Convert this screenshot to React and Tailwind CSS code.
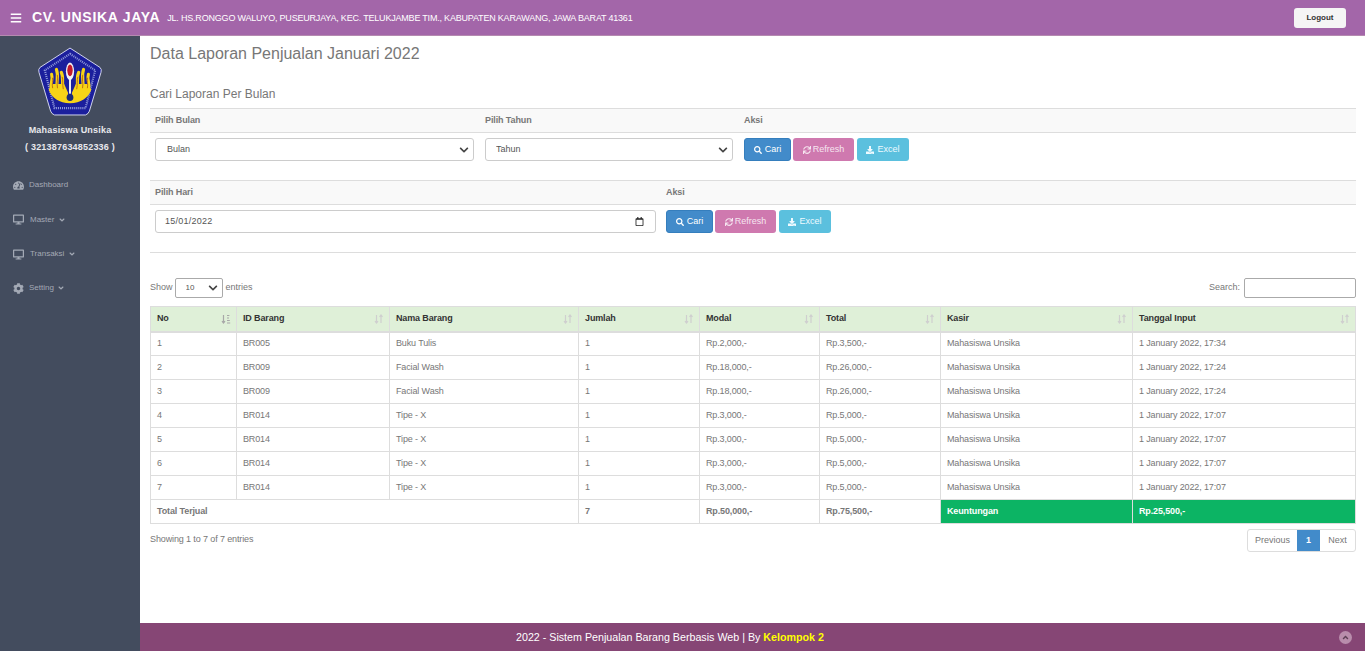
import { FaBars, FaTachometerAlt, FaDesktop, FaCog, FaAngleDown, FaAngleUp, FaSearch, FaSync, FaDownload, FaChevronDown, FaRegCalendar } from 'react-icons/fa'

const rows = [
  ['1', 'BR005', 'Buku Tulis', '1', 'Rp.2,000,-', 'Rp.3,500,-', 'Mahasiswa Unsika', '1 January 2022, 17:34'],
  ['2', 'BR009', 'Facial Wash', '1', 'Rp.18,000,-', 'Rp.26,000,-', 'Mahasiswa Unsika', '1 January 2022, 17:24'],
  ['3', 'BR009', 'Facial Wash', '1', 'Rp.18,000,-', 'Rp.26,000,-', 'Mahasiswa Unsika', '1 January 2022, 17:24'],
  ['4', 'BR014', 'Tipe - X', '1', 'Rp.3,000,-', 'Rp.5,000,-', 'Mahasiswa Unsika', '1 January 2022, 17:07'],
  ['5', 'BR014', 'Tipe - X', '1', 'Rp.3,000,-', 'Rp.5,000,-', 'Mahasiswa Unsika', '1 January 2022, 17:07'],
  ['6', 'BR014', 'Tipe - X', '1', 'Rp.3,000,-', 'Rp.5,000,-', 'Mahasiswa Unsika', '1 January 2022, 17:07'],
  ['7', 'BR014', 'Tipe - X', '1', 'Rp.3,000,-', 'Rp.5,000,-', 'Mahasiswa Unsika', '1 January 2022, 17:07'],
]

const columns = [
  { label: 'No', width: 'w-[86px]' },
  { label: 'ID Barang', width: 'w-[153px]' },
  { label: 'Nama Barang', width: 'w-[189px]' },
  { label: 'Jumlah', width: 'w-[121px]' },
  { label: 'Modal', width: 'w-[120px]' },
  { label: 'Total', width: 'w-[121px]' },
  { label: 'Kasir', width: 'w-[192px]' },
  { label: 'Tanggal Input', width: 'w-[223px]' },
]

const menu = [
  { icon: FaTachometerAlt, label: 'Dashboard', h: 'h-[34px]', gap: 'gap-[5px]' },
  { icon: FaDesktop, label: 'Master', caret: true, h: 'h-[35px]', gap: 'gap-[6px]' },
  { icon: FaDesktop, label: 'Transaksi', caret: true, h: 'h-[34px]', gap: 'gap-[6px]' },
  { icon: FaCog, label: 'Setting', caret: true, h: 'h-[34px]', gap: 'gap-[5px]' },
]

function Logo() {
  return (
    <svg width="64" height="70" viewBox="0 0 66 72" className="block">
      <path d="M33 1 L64 21 Q66 23 65 26 L53 66 Q52 69 49 70 L17 70 Q14 69 13 66 L1 26 Q0 23 2 21 Z" fill="#1b1f9c" stroke="#d5d8ee" strokeWidth="1" />
      <path d="M33 7 L59 24 L49 63 L17 63 L7 24 Z" fill="none" stroke="#8d96da" strokeWidth="2.2" strokeDasharray="1.1 1" />
      {/* wings */}
      <path d="M33 58 C22 58 14 52 11 44 L14 38 L27 38 L31 47 L31 50 L35 50 L35 47 L39 38 L52 38 L55 44 C52 52 44 58 33 58 Z" fill="#f7d417" />
      <g fill="none" strokeLinecap="round">
        <path d="M14 43 C12 37 16 34 14 28 M20 43 C18 36 22 31 19 23 M26 44 C24 37 27 32 24 26" stroke="#f7d417" strokeWidth="3.2" />
        <path d="M52 43 C54 37 50 34 52 28 M46 43 C48 36 44 31 47 23 M40 44 C42 37 39 32 42 26" stroke="#f7d417" strokeWidth="3.2" />
        <path d="M15 42 C14 38 16 35 15 32 M20 42 C19 37 21 33 20 29 M26 43 C25 38 26 34 25 31 M51 42 C52 38 50 35 51 32 M46 42 C47 37 45 33 46 29 M40 43 C41 38 40 34 41 31" stroke="#b8640f" strokeWidth="0.9" />
      </g>
      <ellipse cx="33" cy="25" rx="4.2" ry="9" fill="#f2f2f2" />
      <ellipse cx="33" cy="24" rx="2.8" ry="6" fill="#c3192d" />
      <rect x="32" y="31" width="2" height="17" fill="#f4f4f4" />
      <circle cx="33" cy="52" r="3.5" fill="#1a2a78" />
    </svg>
  )
}

function SortIcon({ active }) {
  if (active) {
    return (
      <svg width="10" height="10" viewBox="0 0 10 10" fill="none" className="text-[#a8a8a8]" stroke="currentColor" strokeWidth="1.2">
        <path d="M2.5 1v8M1 7.2 2.5 9 4 7.2M6 4h2M6 1.5h2.4M6 6.5h2.8M6 9h3.2" />
      </svg>
    )
  }
  return (
    <svg width="10" height="10" viewBox="0 0 10 10" fill="none" className="text-[#cfcfcf]" stroke="currentColor" strokeWidth="1.2">
      <path d="M2.5 1v8M1 7.2 2.5 9 4 7.2M7 9V1M5.5 2.8 7 1l1.5 1.8" />
    </svg>
  )
}

function Select({ label, box, text, chevron, size }) {
  return (
    <div className={`relative ${box}`}>
      <select className={`block h-full w-full appearance-none border bg-white text-[#555555] ${text}`}><option>{label}</option></select>
      <FaChevronDown size={size} className={`absolute top-1/2 -translate-y-1/2 text-[#444444] pointer-events-none ${chevron}`} />
    </div>
  )
}

function ActionButtons() {
  return (
    <div className="flex gap-[2px] text-[9px]">
      <button className="h-[23px] w-[47px] rounded-[3px] bg-[#428bca] border border-[#357ebd] text-white flex items-center justify-center gap-[3px]">
        <FaSearch size={8} />Cari
      </button>
      <button className="h-[23px] w-[61px] rounded-[3px] bg-[#cf79af] text-[#f6e6f0] flex items-center justify-center gap-[2px]">
        <FaSync size={8} />Refresh
      </button>
      <button className="ml-[1px] h-[23px] w-[52px] rounded-[3px] bg-[#5bc0de] text-[#eefaff] flex items-center justify-center gap-[3px]">
        <FaDownload size={8} />Excel
      </button>
    </div>
  )
}

function FilterHead({ children }) {
  return <div className="flex h-[25px] items-center bg-[#f9f9f9] border-y border-[#dddddd] text-[9px] font-bold tracking-[-0.12px] text-[#777777]">{children}</div>
}

export default function App() {
  return (
    <div className="h-[651px] w-[1365px] overflow-hidden flex flex-col bg-white font-['Liberation_Sans',Arial,sans-serif] text-[#777777]">
      {/* Topbar */}
      <header className="h-[36px] shrink-0 bg-[#a366a9] border-b border-[#b58ab0] flex items-center pl-[10px] pr-[19px] text-white">
        <FaBars size={12} />
        <span className="ml-[10px] text-[14px] font-bold tracking-[0.7px]">CV. UNSIKA JAYA</span>
        <span className="ml-[7px] text-[9px] tracking-[-0.2px] pt-[2px]">JL. HS.RONGGO WALUYO, PUSEURJAYA, KEC. TELUKJAMBE TIM., KABUPATEN KARAWANG, JAWA BARAT 41361</span>
        <button className="ml-auto h-[20px] w-[52px] rounded-[3px] bg-[#f5f5f5] text-[#333333] text-[8px] font-bold">Logout</button>
      </header>

      <div className="flex flex-1 min-h-0">
        {/* Sidebar */}
        <aside className="w-[140px] shrink-0 bg-[#434c5e] flex flex-col items-center pt-[11px]">
          <Logo />
          <p className="mt-[6px] text-[9px] leading-[14px] font-bold text-[#e8e8ec] tracking-[0.2px]">Mahasiswa Unsika</p>
          <p className="mt-[3px] text-[9px] leading-[14px] font-bold text-[#e8e8ec] tracking-[0.2px]">( 321387634852336 )</p>
          <nav className="self-stretch mt-[14px] pl-[13px] text-[8px] text-[#a3a9b5]">
            {menu.map(({ icon: Icon, label, caret, h, gap }) => (
              <div key={label} className={`${h} flex items-center ${gap}`}>
                <Icon size={11} />
                <span>{label}</span>
                {caret && <FaAngleDown size={8} className="-ml-[2px]" />}
              </div>
            ))}
          </nav>
        </aside>

        {/* Main */}
        <main className="flex-1 min-w-0 flex flex-col">
          <div className="flex-1 min-h-0 pl-[10px] pr-[9px]">
            <h1 className="mt-[7px] text-[16px] leading-[22px] text-[#777777]">Data Laporan Penjualan Januari 2022</h1>
            <h2 className="mt-[22px] text-[12px] leading-[14px] text-[#777777]">Cari Laporan Per Bulan</h2>

            <div className="mt-[7px]">
              <FilterHead>
                <span className="w-[335px] pl-[5px]">Pilih Bulan</span>
                <span className="w-[259px]">Pilih Tahun</span>
                <span>Aksi</span>
              </FilterHead>
              <div className="h-[47px] flex items-start pt-[5px] pl-[5px]">
                <Select label="Bulan" box="h-[23px] w-[319px]" text="pl-[11px] rounded-[3px] border-[#cccccc] text-[9px]" chevron="right-[5px]" size={10} />
                <Select label="Tahun" box="ml-[11px] h-[23px] w-[248px]" text="pl-[10px] rounded-[3px] border-[#cccccc] text-[9px]" chevron="right-[5px]" size={10} />
                <div className="ml-[11px]"><ActionButtons /></div>
              </div>
              <FilterHead>
                <span className="w-[516px] pl-[5px]">Pilih Hari</span>
                <span>Aksi</span>
              </FilterHead>
              <div className="h-[47px] flex items-start pt-[5px] pl-[5px]">
                <label className="h-[23px] w-[501px] pl-[9px] pr-[11px] flex items-center rounded-[3px] border border-[#cccccc] bg-white">
                  <input readOnly value="15/01/2022" className="flex-1 min-w-0 text-[9px] tracking-[0.25px] text-[#555555] outline-none" />
                  <FaRegCalendar size={9} className="text-[#222222]" />
                </label>
                <div className="ml-[10px]"><ActionButtons /></div>
              </div>
            </div>

            <hr className="border-t border-[#dddddd]" />

            <div className="mt-[25px] flex items-center justify-between h-[20px] text-[9px] text-[#777777]">
              <div className="flex items-center">
                <span>Show</span>
                <Select label="10" box="ml-[2px] mr-[3px] h-[20px] w-[48px]" text="pl-[10px] rounded-[2px] border-[#aaaaaa] text-[8px]" chevron="right-[5px]" size={10} />
                <span>entries</span>
              </div>
              <div className="flex items-center">
                <span>Search:</span>
                <input className="ml-[4px] h-[20px] w-[112px] rounded-[2px] border border-[#aaaaaa]" />
              </div>
            </div>

            <table className="mt-[8px] w-[1205px] table-fixed border-collapse text-[9px] tracking-[-0.13px]">
              <colgroup>
                {columns.map(c => <col key={c.label} className={c.width} />)}
              </colgroup>
              <thead>
                <tr className="h-[25px] bg-[#dff0d8] text-[#333333]">
                  {columns.map((c, i) => (
                    <th key={c.label} className="border border-[#dddddd] border-b-[2px] pl-[6px] pr-[5px] text-left font-bold">
                      <div className="flex items-center justify-between">
                        <span>{c.label}</span>
                        <SortIcon active={i === 0} />
                      </div>
                    </th>
                  ))}
                </tr>
              </thead>
              <tbody>
                {rows.map(r => (
                  <tr key={r[0]} className="h-[24px]">
                    {r.map((cell, i) => (
                      <td key={i} className="border border-[#dddddd] pl-[6px] pr-[5px]">{cell}</td>
                    ))}
                  </tr>
                ))}
                <tr className="h-[24px] font-bold">
                  <td colSpan={3} className="border border-[#dddddd] pl-[6px] pr-[5px]">Total Terjual</td>
                  <td className="border border-[#dddddd] pl-[6px] pr-[5px]">7</td>
                  <td className="border border-[#dddddd] pl-[6px] pr-[5px]">Rp.50,000,-</td>
                  <td className="border border-[#dddddd] pl-[6px] pr-[5px]">Rp.75,500,-</td>
                  <td className="border border-[#dddddd] pl-[6px] pr-[5px] bg-[#0cb464] text-white">Keuntungan</td>
                  <td className="border border-[#dddddd] pl-[6px] pr-[5px] bg-[#0cb464] text-white">Rp.25,500,-</td>
                </tr>
              </tbody>
            </table>

            <div className="mt-[5px] flex items-start justify-between text-[9px]">
              <span className="mt-[4px] tracking-[-0.12px]">Showing 1 to 7 of 7 entries</span>
              <div className="flex h-[23px] items-stretch rounded-[3px] border border-[#dddddd]">
                <span className="w-[49px] flex items-center justify-center">Previous</span>
                <span className="w-[23px] flex items-center justify-center bg-[#428bca] text-white font-bold">1</span>
                <span className="w-[35px] flex items-center justify-center">Next</span>
              </div>
            </div>
          </div>

          {/* Footer */}
          <footer className="h-[28px] shrink-0 bg-[#864675] flex items-center text-white text-[10.7px] relative">
            <p className="ml-[376px]">2022 - Sistem Penjualan Barang Berbasis Web | By <b className="text-[#ffff00]">Kelompok 2</b></p>
            <span className="absolute right-[13px] top-[8px] h-[13px] w-[13px] rounded-full bg-[#b98dac] flex items-center justify-center text-[#5d3f55]">
              <FaAngleUp size={9} />
            </span>
          </footer>
        </main>
      </div>
    </div>
  )
}
